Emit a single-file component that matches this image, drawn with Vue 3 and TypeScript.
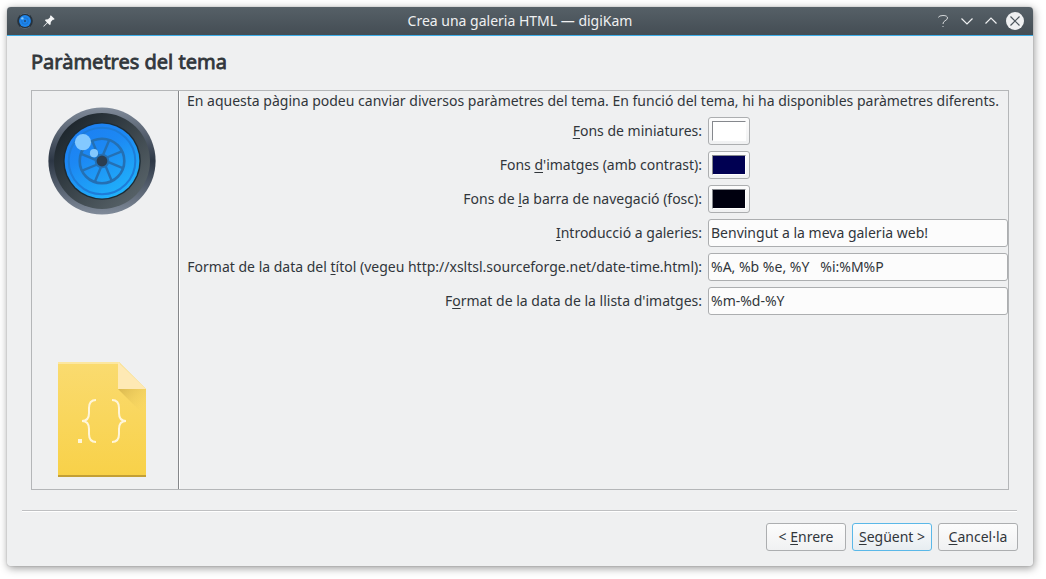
<script setup lang="ts">
interface Mnemonic { before: string; key: string; after: string }
interface ColorRow extends Mnemonic { color: string }
interface TextRow extends Mnemonic { value: string }

const colorRows: ColorRow[] = [
  { before: '', key: 'F', after: 'ons de miniatures:', color: '#ffffff' },
  { before: 'Fons ', key: 'd', after: "'imatges (amb contrast):", color: '#000052' },
  { before: 'Fons de ', key: 'l', after: 'a barra de navegació (fosc):', color: '#00000f' },
]
const textRows: TextRow[] = [
  { before: '', key: 'I', after: 'ntroducció a galeries:', value: 'Benvingut a la meva galeria web!' },
  { before: 'Format de la data del ', key: 't', after: 'ítol (vegeu http://xsltsl.sourceforge.net/date-time.html):', value: '%A, %b %e, %Y   %i:%M%P' },
  { before: 'F', key: 'o', after: "rmat de la data de la llista d'imatges:", value: '%m-%d-%Y' },
]
const blades = Array.from({ length: 8 }, (_, i) => 19 + i * 45)
</script>

<template>
  <div class="desktop">
    <div class="window">
      <header class="titlebar">
        <svg class="app-icon" width="16" height="16" viewBox="0 0 16 16">
          <circle cx="8" cy="8" r="7.8" fill="#26323d" />
          <path d="M3 2.3A7.6 7.6 0 0 1 13 2.3M3 13.7A7.6 7.6 0 0 0 13 13.7" fill="none" stroke="#65717d" stroke-width=".8" />
          <circle cx="8" cy="8" r="5.9" fill="#1d85ec" />
          <circle cx="8" cy="8" r="3.3" fill="none" stroke="#1b6fc8" stroke-width=".8" />
          <circle cx="8" cy="8" r="1" fill="#24476d" />
          <circle cx="5.4" cy="5.4" r="1.2" fill="#83c9ff" />
        </svg>
        <svg class="pin" width="12" height="12" viewBox="0 0 12 12">
          <path d="M7.8.3 11.7 4 10.7 4.8 9.8 4.7 7.8 7 7.6 9.4 6.7 10.1 4.5 7.9 1 11.4.3 11.7.5 11 4 7.4 1.9 5.3 2.6 4.4 5 4.2 7.2 2.2 7 1.2Z" fill="#f4f5f6" />
        </svg>
        <span class="caption">Crea una galeria HTML — digiKam</span>
        <div class="controls">
          <svg width="18" height="18" viewBox="0 0 18 18">
            <path d="M4.5 5.5Q4.5 3.5 9 3.5Q13.5 3.5 13.5 6Q13.5 7.5 11 8.8Q9 9.8 9 12" class="hook" />
            <path d="M8.5 14.5h1" class="hook" />
          </svg>
          <svg width="18" height="18" viewBox="0 0 18 18"><path d="m3.5 6.5 5.5 5.5 5.5-5.5" /></svg>
          <svg width="18" height="18" viewBox="0 0 18 18"><path d="m3.5 11.5 5.5-5.5 5.5 5.5" /></svg>
          <svg width="18" height="18" viewBox="0 0 18 18">
            <circle cx="9" cy="9" r="9" fill="#eff0f1" />
            <path d="m4.5 4.5 9 9m0-9-9 9" class="cross" />
          </svg>
        </div>
      </header>

      <h1>Paràmetres del tema</h1>

      <main class="page">
        <aside class="side">
          <svg width="108" height="108" viewBox="-54 -54 108 108">
            <defs>
              <linearGradient id="rim" x1="0" y1="0" x2="0" y2="1">
                <stop offset="0" stop-color="#808b9a" /><stop offset=".5" stop-color="#2d3745" /><stop offset="1" stop-color="#808b9a" />
              </linearGradient>
              <linearGradient id="barrel" x1="0" y1="0" x2="1" y2="1">
                <stop offset=".1" stop-color="#1b242b" /><stop offset=".9" stop-color="#59646a" />
              </linearGradient>
              <linearGradient id="glass" x1="0" y1="0" x2=".6" y2="1">
                <stop offset="0" stop-color="#1d7cf0" /><stop offset=".45" stop-color="#1c88f4" /><stop offset="1" stop-color="#20b0fa" />
              </linearGradient>
            </defs>
            <circle r="53.6" fill="url(#rim)" />
            <circle r="48" fill="url(#barrel)" />
            <circle r="38.8" fill="#1c2b34" />
            <circle r="37.4" fill="url(#glass)" />
            <g fill="none" stroke="#2470b4">
              <circle r="33.3" stroke-width="2" stroke="#1e7cd8" />
              <circle r="22.3" stroke-width="2.6" />
              <circle r="6" stroke-width="2.6" />
              <path v-for="angle in blades" :key="angle" d="M-1-6.5 0-22" stroke-width="2.4" :transform="`rotate(${angle})`" />
            </g>
            <circle r="5.4" fill="#2c3e50" />
            <circle cx="-19" cy="-18.8" r="8.1" fill="#83c9ff" />
            <circle cx="-8" cy="-7.8" r="4.1" fill="#83c9ff" />
          </svg>
          <svg width="88" height="116" viewBox="0 0 88 116">
            <defs>
              <linearGradient id="paper" x1="0" y1="0" x2="0" y2="1">
                <stop offset="0" stop-color="#fadb70" /><stop offset="1" stop-color="#f8d148" />
              </linearGradient>
              <linearGradient id="fold" gradientUnits="userSpaceOnUse" x1="68" y1="22" x2="91" y2="45">
                <stop offset="0" stop-color="#dcba50" /><stop offset="1" stop-color="#f5d461" stop-opacity="0" />
              </linearGradient>
            </defs>
            <path d="M0 1H61L88 28V116H0Z" fill="url(#paper)" />
            <path d="M0 1H61L63 3H0Z" fill="#fce7a0" />
            <path d="M60 28H88V56Z" fill="url(#fold)" />
            <path d="M60 1 88 28H60Z" fill="#fee9b4" />
            <path d="M0 114H88V116H0Z" fill="#c39f35" />
            <path d="M38 39Q31 39 31 47V52Q31 60 24 60Q31 60 31 68V73Q31 81 38 81M54 39Q61 39 61 47V52Q61 60 68 60Q61 60 61 68V73Q61 81 54 81" fill="none" stroke="#fff6d9" stroke-width="2" />
            <path d="M20 78h4v4h-4z" fill="#fff6d9" />
          </svg>
        </aside>

        <section class="settings">
          <p class="intro">En aquesta pàgina podeu canviar diversos paràmetres del tema. En funció del tema, hi ha disponibles paràmetres diferents.</p>
          <div v-for="row in colorRows" :key="row.color" class="row">
            <label>{{ row.before }}<u>{{ row.key }}</u>{{ row.after }}</label>
            <button class="swatch"><span :style="{ backgroundColor: row.color }"></span></button>
          </div>
          <div v-for="row in textRows" :key="row.value" class="row">
            <label>{{ row.before }}<u>{{ row.key }}</u>{{ row.after }}</label>
            <input type="text" :value="row.value" />
          </div>
        </section>
      </main>

      <footer class="actions">
        <button class="push">&lt; <u>E</u>nrere</button>
        <button class="push primary"><u>S</u>egüent &gt;</button>
        <button class="push"><u>C</u>ancel·la</button>
      </footer>
    </div>
  </div>
</template>

<style>
body { background: #fff; overflow: hidden; }
</style>

<style scoped>
* { box-sizing: border-box; }
.desktop {
  width: 1046px;
  height: 579px;
  padding: 7px 13px 13px 7px;
  background: #fff;
  color: #31363b;
  font: 14px/20px "Noto Sans", sans-serif;
}
.window {
  display: flex;
  flex-direction: column;
  height: 559px;
  background: #eff0f1;
  border-radius: 4px 4px 3px 3px;
  box-shadow: 0 0 1px rgba(0, 0, 0, .4), 1px 2px 8px rgba(0, 0, 0, .42);
}
.titlebar {
  display: flex;
  align-items: center;
  height: 29px;
  padding: 0 9px 0 10px;
  border-bottom: 1px solid #3daee9;
  border-radius: 4px 4px 0 0;
  background: linear-gradient(#566067, #444d54);
  color: #eff0f1;
}
.pin { margin-left: 10px; }
.caption { flex: 1; text-align: center; padding-left: 51px; }
.controls { display: flex; gap: 6px; }
.controls path { fill: none; stroke: #eff0f1; stroke-width: 1.2; }
.controls .hook { stroke: #d5d8da; stroke-width: 1; }
.controls .cross { stroke: #4d565d; }
h1 {
  margin: 12px 0 0 24px;
  height: 28px;
  font-size: 20px;
  line-height: 28px;
  font-weight: 400;
  -webkit-text-stroke: .8px #31363b;
}
.page {
  display: flex;
  width: 978px;
  height: 400px;
  margin: 14px 0 0 24px;
  border: 1px solid #b4b6b8;
}
.side {
  display: flex;
  flex-direction: column;
  justify-content: space-between;
  width: 147px;
  padding: 16px 0 12px 16px;
  border-right: 1px solid #85878a;
}
.side svg:last-child { margin-left: 10px; }
.settings {
  display: flex;
  flex-direction: column;
  gap: 6px;
  flex: 1;
  min-width: 0;
  border-left: 1px solid #fff;
}
.intro { margin: 0 0 0 7px; height: 20px; white-space: nowrap; }
.row { display: flex; align-items: center; height: 28px; gap: 6px; }
label { width: 522px; text-align: right; white-space: nowrap; }
u { text-underline-offset: 2px; text-decoration-thickness: 1px; text-decoration-skip-ink: none; }
button, input { font: inherit; color: inherit; }
input {
  width: 300px;
  height: 28px;
  padding: 0 2px 2px;
  border: 1px solid #acaeb0;
  border-radius: 3px;
  background: #fcfcfc;
  outline: none;
}
.swatch, .push {
  height: 28px;
  border: 1px solid #acaeb0;
  border-radius: 3px;
  background: linear-gradient(#fcfcfc, #f0f1f2);
}
.swatch { width: 42px; padding: 3px; }
.swatch span {
  display: block;
  height: 20px;
  border: 1px solid;
  border-color: #85888d #fff #fff #85888d;
}
.actions {
  display: flex;
  justify-content: flex-end;
  gap: 6px;
  margin: 20px 15px 0;
  padding-top: 12px;
  background:
    linear-gradient(#bfc0c2, #bfc0c2) 0 0 / 995px 1px no-repeat,
    linear-gradient(#fff, #fff) 0 1px / 995px 1px no-repeat;
  border-top: 0 solid transparent;
  padding-top: 13px;
}
.push { width: 80px; padding: 0; white-space: nowrap; }
.push.primary { border-color: #5ab8e8; background: linear-gradient(#fbfcfd, #e7edf1); }
</style>
